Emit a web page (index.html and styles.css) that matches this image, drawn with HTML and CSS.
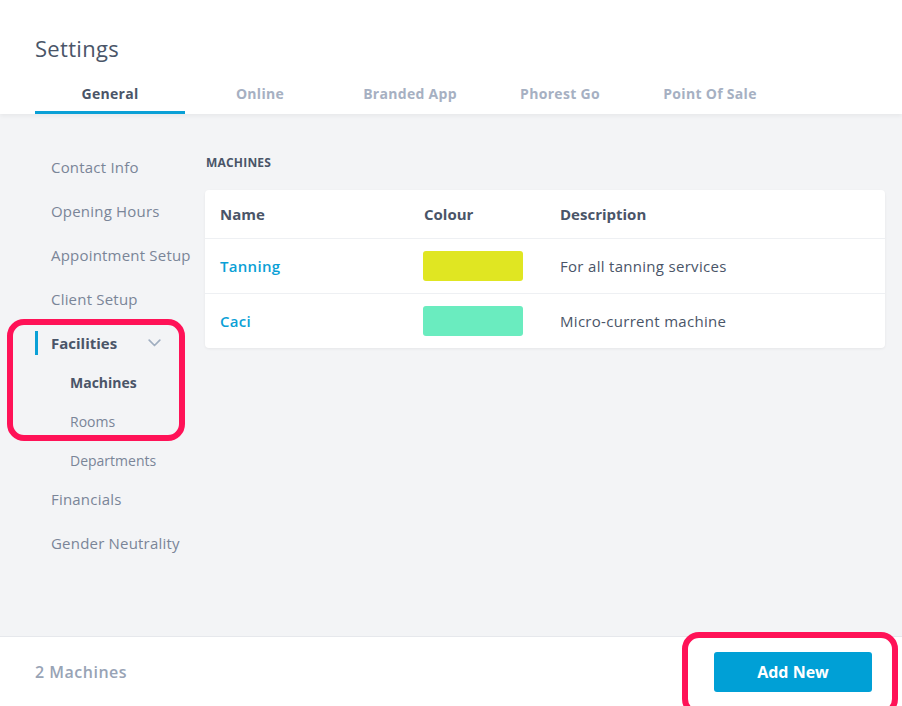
FILE: index.html
```html
<!DOCTYPE html>
<html lang="en">

<head>
    <meta charset="UTF-8">
    <meta name="viewport" content="width=device-width, initial-scale=1.0">
    <title>Settings - Machines</title>
    <link rel="stylesheet" href="styles.css">
</head>

<body>
    <div class="page">
        <span class="corner-mark"></span>

        <header class="top">
            <h1 class="title">Settings</h1>
            <nav class="tabs">
                <a class="tab active">General</a>
                <a class="tab">Online</a>
                <a class="tab">Branded App</a>
                <a class="tab">Phorest Go</a>
                <a class="tab">Point Of Sale</a>
            </nav>
        </header>

        <main class="body">
            <aside class="side-nav">
                <a class="nav-item">Contact Info</a>
                <a class="nav-item">Opening Hours</a>
                <a class="nav-item">Appointment Setup</a>
                <a class="nav-item">Client Setup</a>
                <div class="nav-group">
                    <span class="highlight highlight-nav"></span>
                    <a class="nav-item open">
                        Facilities
                        <svg class="chevron" width="13" height="8" viewBox="0 0 13 8">
                            <path d="M1.2 1.2 L6.5 6.5 L11.8 1.2" fill="none" stroke="#a0aec0" stroke-width="1.7"
                                stroke-linecap="round" stroke-linejoin="round" />
                        </svg>
                    </a>
                    <a class="sub-item current">Machines</a>
                    <a class="sub-item">Rooms</a>
                    <a class="sub-item">Departments</a>
                </div>
                <a class="nav-item">Financials</a>
                <a class="nav-item">Gender Neutrality</a>
            </aside>

            <section class="content">
                <h2 class="section-label">Machines</h2>
                <div class="card">
                    <div class="row head">
                        <span>Name</span>
                        <span>Colour</span>
                        <span>Description</span>
                    </div>
                    <div class="row">
                        <a class="name-link">Tanning</a>
                        <span><i class="swatch" style="background: #e0e622;"></i></span>
                        <span class="desc">For all tanning services</span>
                    </div>
                    <div class="row">
                        <a class="name-link">Caci</a>
                        <span><i class="swatch" style="background: #6aecbf;"></i></span>
                        <span class="desc">Micro-current machine</span>
                    </div>
                </div>
            </section>
        </main>

        <footer class="bottom">
            <span class="count">2 Machines</span>
            <div class="action">
                <span class="highlight highlight-btn"></span>
                <button class="button">Add New</button>
            </div>
        </footer>
    </div>
</body>

</html>
```

FILE: styles.css
```css
* {
    box-sizing: border-box;
}

body {
    margin: 0;
    background: #f3f4f6;
    font-family: 'Open Sans', 'Noto Sans', Arial, sans-serif;
    color: #4a5568;
}

.page {
    position: relative;
    width: 902px;
    height: 706px;
    display: flex;
    flex-direction: column;
    overflow: hidden;
}

.corner-mark {
    position: absolute;
    top: -3px;
    left: 858px;
    width: 7px;
    height: 6px;
    border: 1px solid #111;
    background: #fff;
}

.top {
    background: #fff;
    padding: 34px 0 0 35px;
    box-shadow: 0 2px 4px rgba(0, 0, 0, 0.05);
    position: relative;
    z-index: 1;
}

.title {
    margin: 0;
    font-size: 22px;
    font-weight: 400;
    line-height: 28px;
    letter-spacing: 0.3px;
    color: #4a5568;
}

.tabs {
    display: flex;
    margin-top: 18px;
}

.tab {
    width: 150px;
    text-align: center;
    font-size: 14px;
    font-weight: 700;
    letter-spacing: 0.3px;
    color: #a6b0c2;
    padding: 3px 0 7px;
    border-bottom: 3px solid transparent;
    line-height: 21px;
}

.tab.active {
    color: #4a5568;
    border-bottom-color: #0aa0d6;
}

.body {
    flex: 1;
    display: flex;
}

.side-nav {
    width: 205px;
    padding: 31px 0 0 35px;
    display: flex;
    flex-direction: column;
}

.nav-item {
    display: flex;
    align-items: center;
    height: 44px;
    padding-left: 16px;
    font-size: 15px;
    letter-spacing: 0.2px;
    color: #7a8598;
    white-space: nowrap;
}

.nav-group {
    position: relative;
    margin-bottom: -3px;
}

.nav-item.open {
    position: relative;
    font-weight: 700;
    letter-spacing: 0;
    color: #4a5568;
    margin-bottom: -2px;
}

.nav-item.open::before {
    content: "";
    position: absolute;
    left: 0;
    top: 10px;
    width: 3px;
    height: 24px;
    background: #0aa0d6;
}

.chevron {
    margin-left: 31px;
}

.sub-item {
    display: flex;
    align-items: center;
    height: 39px;
    padding-left: 35px;
    font-size: 14px;
    color: #7a8598;
}

.sub-item.current {
    font-weight: 700;
    color: #4a5568;
}

.highlight {
    position: absolute;
    border: 6px solid #ff1257;
    border-radius: 17px;
    pointer-events: none;
}

.highlight-nav {
    left: -28px;
    top: -2px;
    width: 178px;
    height: 122px;
}

.content {
    flex: 1;
    padding: 41px 17px 0 0;
}

.section-label {
    margin: 0 0 20px 1px;
    font-size: 12px;
    font-weight: 700;
    text-transform: uppercase;
    letter-spacing: 0.2px;
    line-height: 15px;
    color: #4a5568;
}

.card {
    background: #fff;
    border-radius: 4px;
    box-shadow: 0 1px 3px rgba(0, 0, 0, 0.06);
}

.row {
    display: grid;
    grid-template-columns: 204px 136px 1fr;
    align-items: center;
    padding-left: 15px;
    height: 55px;
    border-top: 1px solid #eef0f3;
    font-size: 15px;
    letter-spacing: 0.3px;
}

.row.head {
    height: 48px;
    border-top: none;
    font-weight: 700;
    letter-spacing: 0;
    color: #4a5568;
}

.name-link {
    color: #0aa0d6;
    font-weight: 600;
}

.swatch {
    display: block;
    width: 100px;
    height: 30px;
    border-radius: 3px;
    margin-left: -1px;
}

.desc {
    color: #4a5568;
}

.bottom {
    height: 70px;
    background: #fff;
    border-top: 1px solid #e6e8ec;
    display: flex;
    align-items: center;
    justify-content: space-between;
    padding: 0 30px 0 35px;
}

.count {
    font-size: 16px;
    font-weight: 600;
    letter-spacing: 0.5px;
    color: #98a3b5;
}

.action {
    position: relative;
}

.highlight-btn {
    left: -32px;
    top: -20px;
    width: 216px;
    height: 84px;
}

.button {
    width: 158px;
    height: 40px;
    border: none;
    border-radius: 3px;
    background: #00a0d6;
    color: #fff;
    font-family: inherit;
    font-size: 16px;
    font-weight: 700;
    cursor: pointer;
}
```
